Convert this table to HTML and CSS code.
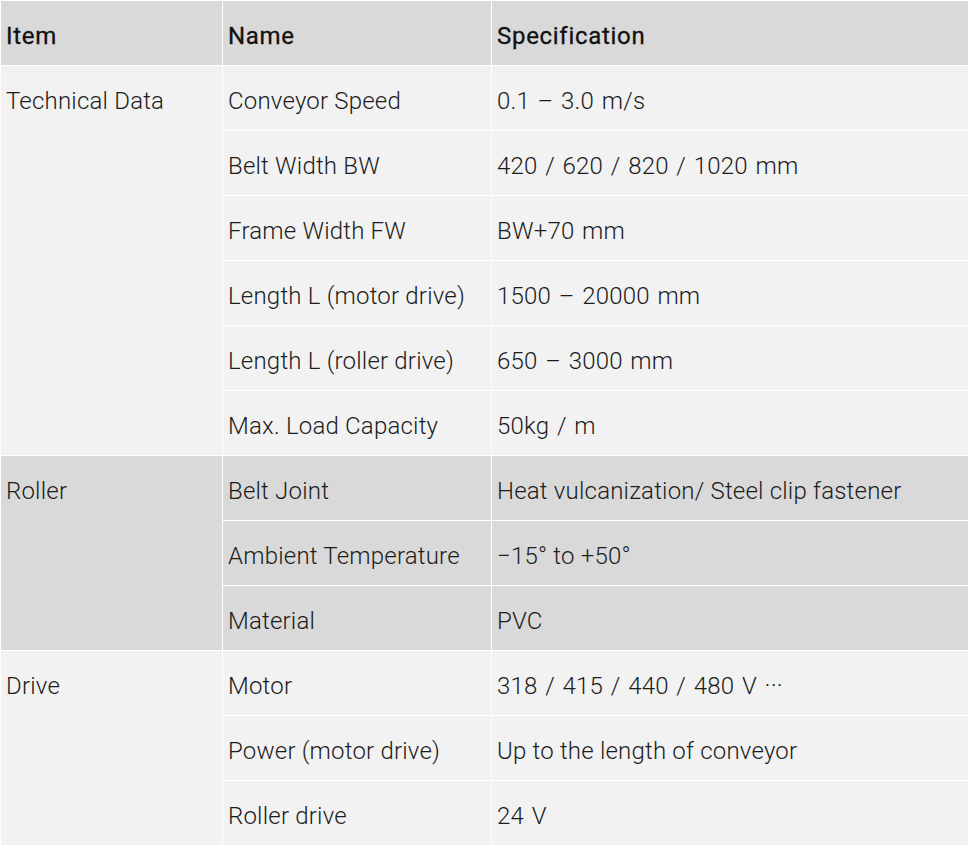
FILE: index.html
```html
<!DOCTYPE html>
<html>
<head>
<meta charset="utf-8">
<link rel="stylesheet" href="styles.css">
</head>
<body>
<table class="spec">
  <colgroup>
    <col class="c1"><col class="c2"><col class="c3">
  </colgroup>
  <thead>
    <tr><th>Item</th><th>Name</th><th>Specification</th></tr>
  </thead>
  <tbody class="light">
    <tr><td rowspan="6">Technical Data</td><td>Conveyor Speed</td><td class="num">0.1 – 3.0 m/s</td></tr>
    <tr><td>Belt Width BW</td><td class="num">420 / 620 / 820 / 1020 mm</td></tr>
    <tr><td>Frame Width FW</td><td class="num">BW+70 mm</td></tr>
    <tr><td>Length L (motor drive)</td><td class="num">1500 – 20000 mm</td></tr>
    <tr><td>Length L (roller drive)</td><td class="num">650 – 3000 mm</td></tr>
    <tr><td>Max. Load Capacity</td><td class="num">50kg / m</td></tr>
  </tbody>
  <tbody class="dark">
    <tr><td rowspan="3">Roller</td><td>Belt Joint</td><td>Heat vulcanization/ Steel clip fastener</td></tr>
    <tr><td>Ambient Temperature</td><td>−15° to +50°</td></tr>
    <tr><td>Material</td><td>PVC</td></tr>
  </tbody>
  <tbody class="light">
    <tr><td rowspan="3">Drive</td><td>Motor</td><td class="num">318 / 415 / 440 / 480 V ···</td></tr>
    <tr><td>Power (motor drive)</td><td>Up to the length of conveyor</td></tr>
    <tr><td>Roller drive</td><td class="num">24 V</td></tr>
  </tbody>
</table>
</body>
</html>
```
FILE: styles.css
```css
html, body {
  margin: 0;
  padding: 0;
  background: #ffffff;
}
.spec {
  border-collapse: separate;
  border-spacing: 1px;
  width: 969px;
  table-layout: fixed;
  font-family: Roboto, "Liberation Sans", sans-serif;
  font-size: 24px;
  color: #1c1c1c;
}
.c1 { width: 221px; }
.c2 { width: 268px; }
.c3 { width: 476px; }
.spec th, .spec td {
  height: 64px;
  padding: 6px 5px 0;
  line-height: 58px;
  text-align: left;
  vertical-align: top;
  white-space: nowrap;
  box-sizing: border-box;
}
.spec th {
  background: #d9d9d9;
  font-weight: 400;
  letter-spacing: 0.7px;
  color: #111111;
  -webkit-text-stroke: 0.3px #111111;
}
.spec td {
  font-weight: 300;
  letter-spacing: 0.2px;
}
.spec td.num {
  word-spacing: 1.6px;
}
.light td { background: #f2f2f2; }
.dark td { background: #d9d9d9; }
```
